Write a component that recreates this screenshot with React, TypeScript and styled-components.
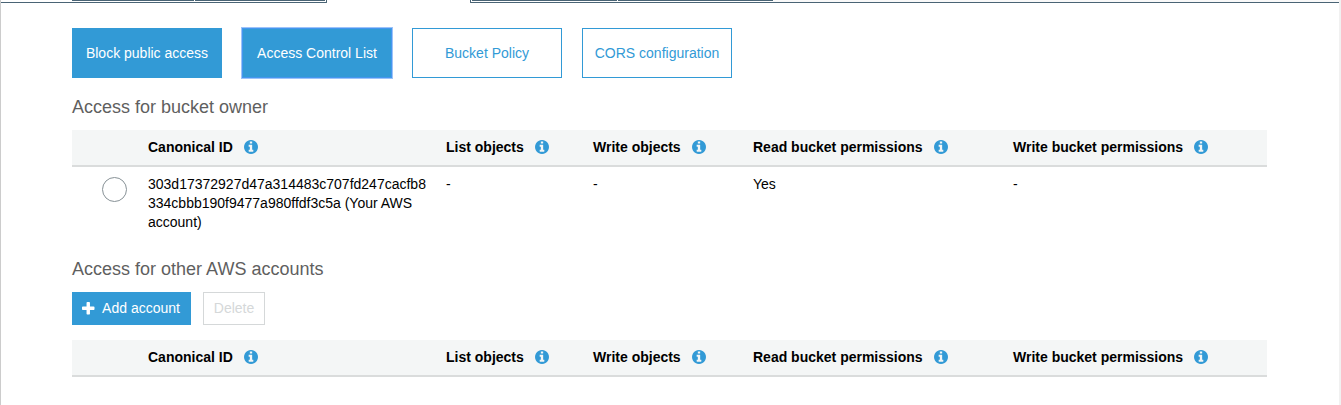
import React from "react";
import styled, { createGlobalStyle, css } from "styled-components";

const Global = createGlobalStyle`
  * { box-sizing: border-box; }
  html, body { margin: 0; background: #fff; }
  body { font: 14px/19px "Liberation Sans", Arial, sans-serif; color: #000; overflow: hidden; }
`;

const Page = styled.div`
  width: 1341px;
  height: 405px;
  border-left: 1px solid #ccc;
  border-right: 2px solid #f1f1f1;
`;

const TabStrip = styled.div`
  display: flex;
  height: 3px;
`;

const TabGroup = styled.div<{ $side: "left" | "right" }>`
  display: flex;
  gap: 1px;
  height: 3px;
  border-bottom: 1px solid #4a6475;
  ${(p) =>
    p.$side === "left"
      ? css`
          width: 326px;
          padding-left: 71px;
          border-right: 1px solid #4a6475;
          border-bottom-right-radius: 1px;
        `
      : css`
          flex: 1;
          margin-left: 143px;
          padding-left: 1px;
          border-left: 1px solid #4a6475;
          border-bottom-left-radius: 1px;
        `}
`;

const TabEdge = styled.div<{ $width: number }>`
  width: ${(p) => p.$width}px;
  height: 1px;
  background: #4a6475;
`;

const TabFill = styled.div`
  flex: 1;
  height: 2px;
  margin-left: -1px;
  background: #f9f9f9;
`;

const Content = styled.main`
  width: 1195px;
  margin-left: 71px;
  padding-top: 25px;
`;

const SubTabs = styled.nav`
  display: flex;
  gap: 20px;
`;

const SubTab = styled.button<{ $filled?: boolean; $focused?: boolean }>`
  width: 150px;
  height: 50px;
  padding: 0;
  border: 1px solid #329ad6;
  background: ${(p) => (p.$filled ? "#329ad6" : "#fff")};
  color: ${(p) => (p.$filled ? "#fff" : "#329ad6")};
  font: 14px/19px "Liberation Sans", Arial, sans-serif;
  white-space: nowrap;
  ${(p) =>
    p.$focused &&
    css`
      border-color: #4496ef;
      box-shadow: 0 0 0 1px #9cc3f8;
    `}
`;

const Heading = styled.h2`
  margin: 0;
  height: 24px;
  font-size: 18px;
  line-height: 24px;
  font-weight: 400;
  color: #5f5f5f;
`;

const OwnerSection = styled.section`
  margin-top: 17px;
`;

const AccountsSection = styled.section`
  margin-top: 19px;
`;

const Table = styled.div`
  margin-top: 11px;
`;

const Row = styled.div`
  display: grid;
  grid-template-columns: 76px 298px 147px 160px 260px 254px;
`;

const HeadRow = styled(Row)`
  height: 37px;
  padding-top: 8px;
  background: #f4f6f6;
  border-bottom: 2px solid #dadcdc;
  font-weight: 700;
`;

const BodyRow = styled(Row)`
  height: 71px;
  padding-top: 8px;
`;

const HeadCell = styled.div`
  display: flex;
  align-items: center;
  gap: 11.2px;
  height: 18px;
  line-height: 18px;
  white-space: nowrap;
`;

const Cell = styled.div`
  padding-right: 18px;
  word-break: break-word;
`;

const Radio = styled.span`
  display: block;
  width: 25px;
  height: 25px;
  margin: 2px 0 0 30px;
  border: 1px solid #879196;
  border-radius: 50%;
`;

const Actions = styled.div`
  display: flex;
  gap: 12px;
  margin: 11px 0 15px;
`;

const ActionButton = styled.button<{ $primary?: boolean }>`
  display: flex;
  align-items: center;
  justify-content: center;
  gap: 7.5px;
  width: ${(p) => (p.$primary ? 119 : 62)}px;
  height: 33px;
  padding: ${(p) => (p.$primary ? "0 1px 0 0" : "0")};
  border: 1px solid ${(p) => (p.$primary ? "#329ad6" : "#d5d8d9")};
  background: ${(p) => (p.$primary ? "#329ad6" : "#fff")};
  color: ${(p) => (p.$primary ? "#fff" : "#d5d8d9")};
  font: 14px/19px "Liberation Sans", Arial, sans-serif;
  white-space: nowrap;
`;

const InfoSvg = styled.svg`
  width: 14px;
  height: 14px;
  fill: #329ad6;
`;

const InfoIcon = () => (
  <InfoSvg viewBox="0 128 1536 1536">
    <path d="M1024 1376v-160q0-14-9-23t-23-9h-96v-512q0-14-9-23t-23-9h-320q-14 0-23 9t-9 23v160q0 14 9 23t23 9h96v320h-96q-14 0-23 9t-9 23v160q0 14 9 23t23 9h448q14 0 23-9t9-23zm-128-896v-160q0-14-9-23t-23-9h-192q-14 0-23 9t-9 23v160q0 14 9 23t23 9h192q14 0 23-9t9-23zm640 416q0 209-103 385.5t-279.5 279.5-385.5 103-385.5-103-279.5-279.5-103-385.5 103-385.5 279.5-279.5 385.5-103 385.5 103 279.5 279.5 103 385.5z" />
  </InfoSvg>
);

const PlusIcon = () => (
  <svg width="12.5" height="12.5" viewBox="192 128 1408 1408" fill="currentColor">
    <path d="M1600 736v192q0 40-28 68t-68 28h-416v416q0 40-28 68t-68 28h-192q-40 0-68-28t-28-68v-416h-416q-40 0-68-28t-28-68v-192q0-40 28-68t68-28h416v-416q0-40 28-68t68-28h192q40 0 68 28t28 68v416h416q40 0 68 28t28 68z" />
  </svg>
);

const columns = [
  "Canonical ID",
  "List objects",
  "Write objects",
  "Read bucket permissions",
  "Write bucket permissions",
];

const TableHead = () => (
  <HeadRow>
    <span />
    {columns.map((name) => (
      <HeadCell key={name}>
        {name}
        <InfoIcon />
      </HeadCell>
    ))}
  </HeadRow>
);

export default function App() {
  return (
    <Page>
      <Global />
      <TabStrip>
        <TabGroup $side="left">
          <TabEdge $width={122} />
          <TabEdge $width={130} />
        </TabGroup>
        <TabGroup $side="right">
          <TabEdge $width={145} />
          <TabEdge $width={155} />
          <TabFill />
        </TabGroup>
      </TabStrip>
      <Content>
        <SubTabs>
          <SubTab $filled>Block public access</SubTab>
          <SubTab $filled $focused>
            Access Control List
          </SubTab>
          <SubTab>Bucket Policy</SubTab>
          <SubTab>CORS configuration</SubTab>
        </SubTabs>
        <OwnerSection>
          <Heading>Access for bucket owner</Heading>
          <Table>
            <TableHead />
            <BodyRow>
              <Radio role="radio" aria-checked="false" />
              <Cell>
                303d17372927d47a314483c707fd247cacfb8334cbbb190f9477a980ffdf3c5a (Your AWS account)
              </Cell>
              <Cell>-</Cell>
              <Cell>-</Cell>
              <Cell>Yes</Cell>
              <Cell>-</Cell>
            </BodyRow>
          </Table>
        </OwnerSection>
        <AccountsSection>
          <Heading>Access for other AWS accounts</Heading>
          <Actions>
            <ActionButton $primary>
              <PlusIcon />
              Add account
            </ActionButton>
            <ActionButton disabled>Delete</ActionButton>
          </Actions>
          <TableHead />
        </AccountsSection>
      </Content>
    </Page>
  );
}
